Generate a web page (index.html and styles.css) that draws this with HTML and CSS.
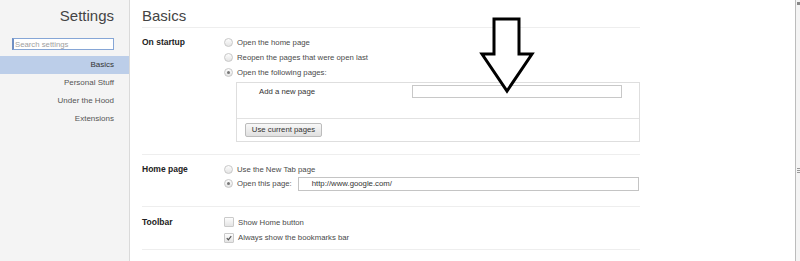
FILE: index.html
```html
<!DOCTYPE html>
<html>
<head>
<meta charset="utf-8">
<link rel="stylesheet" href="styles.css">
</head>
<body>
<div class="page">
  <aside class="sidebar">
    <div class="side-title">Settings</div>
    <div class="search-wrap"><input class="search" type="text" placeholder="Search settings"></div>
    <nav class="nav">
      <div class="nav-item active">Basics</div>
      <div class="nav-item">Personal Stuff</div>
      <div class="nav-item">Under the Hood</div>
      <div class="nav-item">Extensions</div>
    </nav>
  </aside>
  <main class="content">
    <div class="page-title">Basics</div>
    <section class="section startup">
      <div class="label">On startup</div>
      <div class="controls">
        <div class="opt"><span class="radio"></span>Open the home page</div>
        <div class="opt"><span class="radio"></span>Reopen the pages that were open last</div>
        <div class="opt"><span class="radio on"></span>Open the following pages:</div>
        <div class="pages-box">
          <div class="pages-list">
            <span class="add-label">Add a new page</span>
            <span class="add-input"></span>
          </div>
          <div class="pages-actions">
            <button class="btn">Use current pages</button>
          </div>
        </div>
      </div>
    </section>
    <section class="section home">
      <div class="label">Home page</div>
      <div class="controls">
        <div class="opt"><span class="radio"></span>Use the New Tab page</div>
        <div class="opt"><span class="radio on"></span>Open this page:<span class="url-input">http://www.google.com/</span></div>
      </div>
    </section>
    <section class="section toolbar">
      <div class="label">Toolbar</div>
      <div class="controls">
        <div class="opt"><span class="check"></span>Show Home button</div>
        <div class="opt"><span class="check on"><svg viewBox="0 0 10 10" width="10" height="10"><path d="M2.2 5.2 L4.2 7.2 L7.8 2.8" fill="none" stroke="#555" stroke-width="1.5"/></svg></span>Always show the bookmarks bar</div>
      </div>
    </section>
  </main>
  <div class="scrollbar"><span class="sb-top"></span><span class="sb-grip"></span></div>
  <svg class="arrow" width="58" height="80" viewBox="0 0 58 80"><path d="M16 4 H41 V39 H54 L29 76 L4 39 H16 Z" fill="#fff" stroke="#000" stroke-width="3" stroke-linejoin="miter"/></svg>
</div>
</body>
</html>
```
FILE: styles.css
```css
html, body {
  margin: 0;
  padding: 0;
  background: #fff;
}
body {
  font-family: "Liberation Sans", Arial, sans-serif;
  font-size: 7.75px;
  color: #444;
}
.page {
  position: relative;
  display: flex;
  width: 800px;
  height: 261px;
  overflow: hidden;
}
.sidebar {
  width: 130px;
  flex: none;
  background: #f4f4f4;
  border-right: 1px solid #dadada;
  box-sizing: border-box;
}
.side-title {
  text-align: right;
  font-size: 15px;
  line-height: 18px;
  height: 18px;
  color: #444;
  padding: 7px 15px 0 0;
}
.search-wrap {
  padding: 13px 0 0 12px;
}
.search {
  display: block;
  box-sizing: border-box;
  width: 102px;
  height: 12px;
  margin: 0;
  padding: 0 1px;
  border: 1px solid #86a6d6;
  border-left: 2px solid #6f8fc4;
  font-family: "Liberation Sans", Arial, sans-serif;
  font-size: 7.75px;
  line-height: 10px;
  background: #fff;
  outline: none;
}
.search::placeholder {
  color: #a0a0a0;
}
.nav {
  margin-top: 6px;
}
.nav-item {
  height: 18px;
  line-height: 18px;
  text-align: right;
  padding-right: 15px;
  font-size: 8px;
  color: #555;
}
.nav-item.active {
  background: #bccee9;
  color: #333;
}
.content {
  flex: none;
  width: 498px;
  padding-left: 12px;
}
.page-title {
  height: 20px;
  padding-top: 7px;
  font-size: 15px;
  line-height: 18px;
  color: #444;
  border-bottom: 1px solid #eeeeee;
}
.section {
  display: grid;
  grid-template-columns: 82px 1fr;
  border-bottom: 1px solid #eeeeee;
}
.label {
  font-weight: bold;
  color: #222;
  font-size: 8.5px;
  line-height: 15px;
}
.startup {
  padding: 7px 0 12px;
}
.home {
  padding: 7px 0 15px;
}
.home .label {
  line-height: 14px;
}
.toolbar {
  padding: 8px 0 4px;
}
.toolbar .label {
  line-height: 14px;
}
.opt {
  display: flex;
  align-items: center;
  height: 15px;
  color: #4a4a4a;
}
.home .opt:first-child,
.toolbar .opt:first-child {
  height: 14px;
}
.toolbar .opt + .opt {
  margin-top: 1px;
}
.radio {
  width: 7px;
  height: 7px;
  border-radius: 50%;
  border: 1px solid #c8c8c8;
  background: linear-gradient(#fdfdfd, #e4e4e4);
  margin-right: 4px;
  position: relative;
  flex: none;
}
.radio.on::after {
  content: "";
  position: absolute;
  left: 2px;
  top: 2px;
  width: 3px;
  height: 3px;
  border-radius: 50%;
  background: #777;
}
.pages-box {
  margin: 2px 0 0 12px;
  border: 1px solid #dedede;
}
.pages-list {
  height: 36px;
  display: flex;
  align-items: flex-start;
  padding-top: 2px;
  box-sizing: border-box;
  border-bottom: 1px solid #e2e2e2;
}
.add-label {
  width: 153px;
  padding-left: 22px;
  line-height: 14px;
  color: #333;
}
.add-input {
  width: 208px;
  height: 11px;
  border: 1px solid #c8c8c8;
  background: #fff;
}
.pages-actions {
  height: 22px;
  padding: 4px 0 0 8px;
  box-sizing: border-box;
}
.btn {
  display: block;
  height: 14px;
  width: 77px;
  margin: 0;
  padding: 0;
  border: 1px solid #bcbcbc;
  border-radius: 2px;
  background: linear-gradient(#f8f8f8, #e0e0e0);
  font-family: "Liberation Sans", Arial, sans-serif;
  font-size: 7.75px;
  line-height: 12px;
  color: #333;
}
.url-input {
  margin-left: 6px;
  width: 326px;
  height: 12px;
  border: 1px solid #c4c4c4;
  padding-left: 13px;
  line-height: 12px;
  color: #333;
}
.check {
  width: 8px;
  height: 8px;
  border: 1px solid #cacaca;
  border-radius: 1px;
  background: linear-gradient(#fdfdfd, #e4e4e4);
  margin-right: 4px;
  flex: none;
  display: flex;
}
.check svg {
  width: 8px;
  height: 8px;
}
.scrollbar {
  margin-left: auto;
  width: 4px;
  border-left: 1px solid #bcbcbc;
  background: #f4f4f4;
  position: relative;
  display: flex;
  flex-direction: column;
  align-items: center;
}
.sb-top {
  width: 3px;
  height: 3px;
  background: #888;
  margin-top: 2px;
}
.sb-grip {
  width: 3px;
  height: 5px;
  margin-top: 163px;
  background: repeating-linear-gradient(#999 0 1px, #f4f4f4 1px 2px);
}
.arrow {
  position: absolute;
  left: 478px;
  top: 15px;
}
```
